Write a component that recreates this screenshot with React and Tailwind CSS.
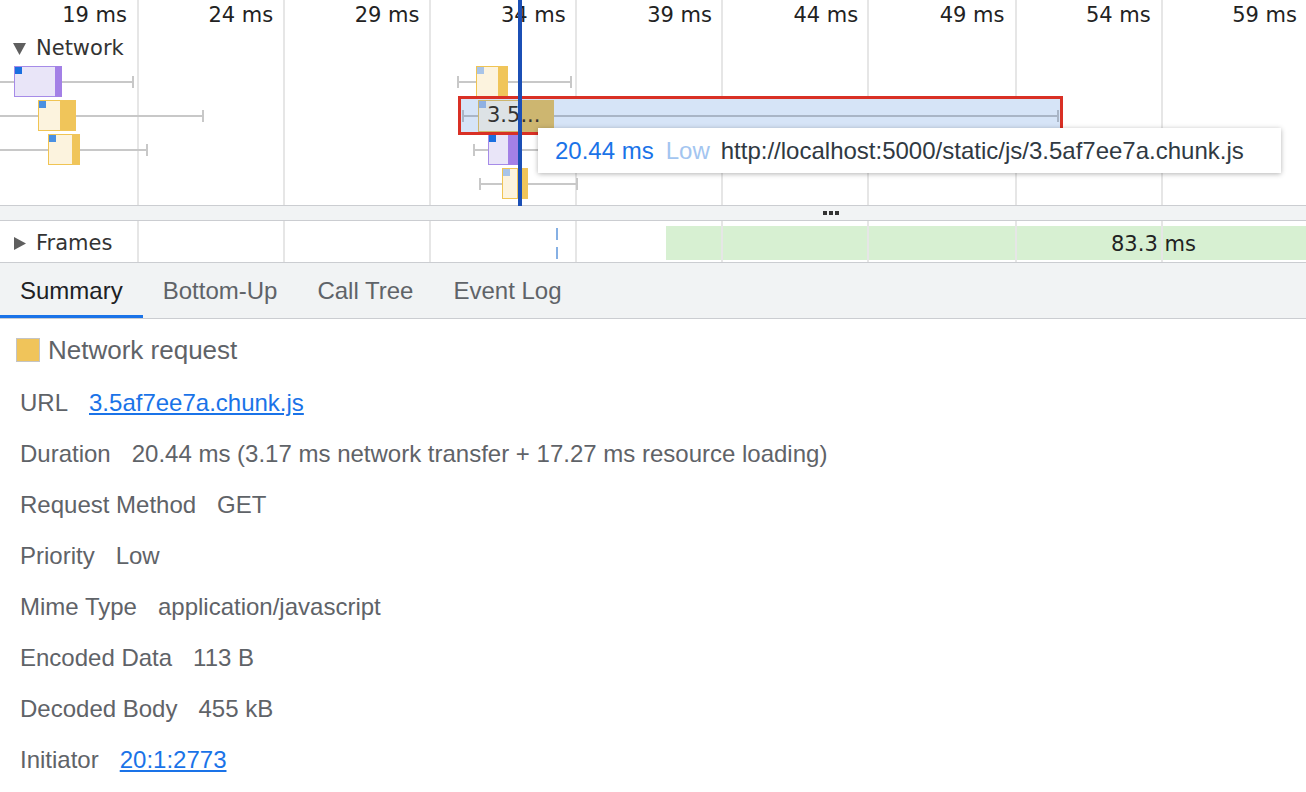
import React from "react";

const GRID = [137, 283, 429, 575, 721, 867, 1015, 1161];
const LABELS = ["19 ms", "24 ms", "29 ms", "34 ms", "39 ms", "44 ms", "49 ms", "54 ms", "59 ms"];

// network bars: x, width, row top, solid tail width, colour kind, corner square colour
const BARS = [
  { x: 14, w: 48, top: 66, solid: 7, kind: "purple", sq: "#1a6fe0", wl: -10, wr: 133, lt: false },
  { x: 38, w: 38, top: 100, solid: 16, kind: "yellow", sq: "#4a90e2", wl: -10, wr: 203, lt: false },
  { x: 48, w: 32, top: 134, solid: 8, kind: "yellow", sq: "#4a90e2", wl: -10, wr: 147, lt: false },
  { x: 476, w: 32, top: 66, solid: 10, kind: "yellow", sq: "#a8c4e8", wl: 457, wr: 571, lt: true },
  { x: 488, w: 30, top: 134, solid: 10, kind: "purple", sq: "#1a6fe0", wl: 473, wr: 600, lt: true },
  { x: 502, w: 26, top: 168, solid: 11, kind: "yellow", sq: "#a8c4e8", wl: 479, wr: 577, lt: true },
];

const ROWS = [
  ["Duration", "20.44 ms (3.17 ms network transfer + 17.27 ms resource loading)"],
  ["Request Method", "GET"],
  ["Priority", "Low"],
  ["Mime Type", "application/javascript"],
  ["Encoded Data", "113 B"],
  ["Decoded Body", "455 kB"],
];

const Whisker = ({ from, to, y, color, leftTick, rightTick = true }) => (
  <>
    <div className="absolute h-[2px]" style={{ left: from, width: to - from, top: y, background: color }} />
    {leftTick && <div className="absolute w-[2px] h-[12px]" style={{ left: from, top: y - 5, background: color }} />}
    {rightTick && <div className="absolute w-[2px] h-[12px]" style={{ left: to - 1, top: y - 5, background: color }} />}
  </>
);

const Bar = ({ bar }) => (
  <>
    <Whisker from={bar.wl} to={bar.wr} y={bar.top + 15} color="#c8c8c8" leftTick={bar.lt} />
    <div
      className={`absolute h-[31px] border ${bar.kind === "purple" ? "border-[#a68be8] bg-[#e9e5f8]" : "border-[#f0c453] bg-[#fcf3de]"}`}
      style={{ left: bar.x, top: bar.top, width: bar.w }}
    >
      <div
        className={`absolute -right-px -top-px -bottom-px ${bar.kind === "purple" ? "bg-[#a380e6]" : "bg-[#f0c55a]"}`}
        style={{ width: bar.solid }}
      />
      <div className="absolute left-0 top-0 w-[7px] h-[7px]" style={{ background: bar.sq }} />
    </div>
  </>
);

const GridLines = () =>
  GRID.map((x) => <div key={x} className="absolute top-0 bottom-0 w-[2px] bg-[#e6e6e6]" style={{ left: x }} />);

export default function App() {
  return (
    <div className="w-[1306px] h-[792px] overflow-hidden bg-white flex flex-col">
      {/* network flame chart */}
      <div className="relative h-[206px] shrink-0 border-b border-[#cbcdd1] font-['DejaVu_Sans',sans-serif] text-[21px] text-[#222]">
        <GridLines />
        {LABELS.map((l, i) => (
          <div key={l} className="absolute top-0 h-[32px] flex items-center justify-end w-[120px]" style={{ left: 137 + i * 146.25 - 130 }}>
            {l}
          </div>
        ))}
        <div className="absolute left-[13px] top-[35px] flex items-center gap-[10px] h-[28px]">
          <svg width="13" height="12" viewBox="0 0 13 12">
            <path d="M0 0 L13 0 L6.5 12 Z" fill="#5f5f5f" />
          </svg>
          <span className="text-[#333]">Network</span>
        </div>

        {BARS.map((b, i) => (
          <Bar key={i} bar={b} />
        ))}

        {/* selected request */}
        <div className="absolute left-[458px] top-[96px] w-[605px] h-[39px] border-[3px] border-[#d93025] bg-[#d6e4f7]" />
        <Whisker from={462} to={1058} y={115} color="#a9b5c6" leftTick />
        <div className="absolute left-[478px] top-[100px] w-[76px] h-[32px] flex">
          <div className="w-[40px] h-full bg-[#dde2e5] border-l border-y border-[#cdb66e]" />
          <div className="flex-1 h-full bg-[#cdb670]" />
          <div className="absolute left-px top-px w-[7px] h-[7px] bg-[#8fb0e2]" />
          <span className="absolute left-[9px] top-0 h-full flex items-center text-[#333] whitespace-nowrap">3.5...</span>
        </div>

        {/* cursor */}
        <div className="absolute left-[518px] top-0 w-[4px] h-[206px] bg-[#1b4fb5]" />

        {/* tooltip */}
        <div className="absolute left-[538px] top-[128px] w-[743px] h-[45px] bg-white shadow-[0_1px_5px_rgba(0,0,0,0.3)] flex items-center pl-[17px] font-['Liberation_Sans',Arial,sans-serif] text-[24px] whitespace-nowrap">
          <span className="text-[#1a73e8]">20.44 ms</span>
          <span className="ml-[12px] text-[#a3c5f0]">Low</span>
          <span className="ml-[11px] text-[#303942]">http://localhost:5000/static/js/3.5af7ee7a.chunk.js</span>
        </div>
      </div>

      {/* splitter */}
      <div className="h-[15px] shrink-0 bg-[#f1f3f4] border-b border-[#cbcdd1] flex pl-[823px]">
        <div className="flex gap-[2px] items-center h-full">
          <div className="w-[4px] h-[4px] bg-[#333]" />
          <div className="w-[4px] h-[4px] bg-[#333]" />
          <div className="w-[4px] h-[4px] bg-[#333]" />
        </div>
      </div>

      {/* frames */}
      <div className="relative h-[42px] shrink-0 border-b border-[#cbcdd1] font-['DejaVu_Sans',sans-serif] text-[21px] text-[#222]">
        <div className="absolute left-[666px] right-0 top-[5px] h-[34px] bg-[#d7f0d2]" />
        <GridLines />
        <div className="absolute left-[556px] top-[7px] w-[2px] h-[12px] bg-[#86b0e4]" />
        <div className="absolute left-[556px] top-[26px] w-[2px] h-[12px] bg-[#86b0e4]" />
        <div className="absolute left-[1111px] top-[7px] h-[34px] flex items-center whitespace-nowrap">83.3 ms</div>
        <div className="absolute left-[14px] top-[2px] h-full flex items-center gap-[10px]">
          <svg width="12" height="13" viewBox="0 0 12 13">
            <path d="M0 0 L12 6.5 L0 13 Z" fill="#5f5f5f" />
          </svg>
          <span className="text-[#333]">Frames</span>
        </div>
      </div>

      {/* tabs */}
      <div className="h-[56px] shrink-0 bg-[#f1f3f4] border-b border-[#cbcdd1] flex font-['Liberation_Sans',Arial,sans-serif] text-[24px]">
        <div className="relative px-5 flex items-center text-[#202124]">
          Summary
          <div className="absolute left-0 right-0 bottom-0 h-[3px] bg-[#1a73e8]" />
        </div>
        <div className="px-5 flex items-center text-[#5f6368]">Bottom-Up</div>
        <div className="px-5 flex items-center text-[#5f6368]">Call Tree</div>
        <div className="px-5 flex items-center text-[#5f6368]">Event Log</div>
      </div>

      {/* summary */}
      <div className="flex-1 pt-[16px] font-['Liberation_Sans',Arial,sans-serif] text-[24px] text-[#5f6368]">
        <div className="h-[30px] flex items-center pl-[16px]">
          <div className="w-[24px] h-[24px] bg-[#f0c45a] border border-[#c4c4c4]" />
          <span className="ml-[8px] text-[26px]">Network request</span>
        </div>
        <div className="mt-[12px] pl-[20px]">
          <div className="h-[51px] flex items-center">
            <span>URL</span>
            <span className="ml-[21px] text-[#1a73e8] underline">3.5af7ee7a.chunk.js</span>
          </div>
          {ROWS.map(([k, v]) => (
            <div key={k} className="h-[51px] flex items-center">
              <span>{k}</span>
              <span className="ml-[21px]">{v}</span>
            </div>
          ))}
          <div className="h-[51px] flex items-center">
            <span>Initiator</span>
            <span className="ml-[21px] text-[#1a73e8] underline">20:1:2773</span>
          </div>
        </div>
      </div>
    </div>
  );
}
